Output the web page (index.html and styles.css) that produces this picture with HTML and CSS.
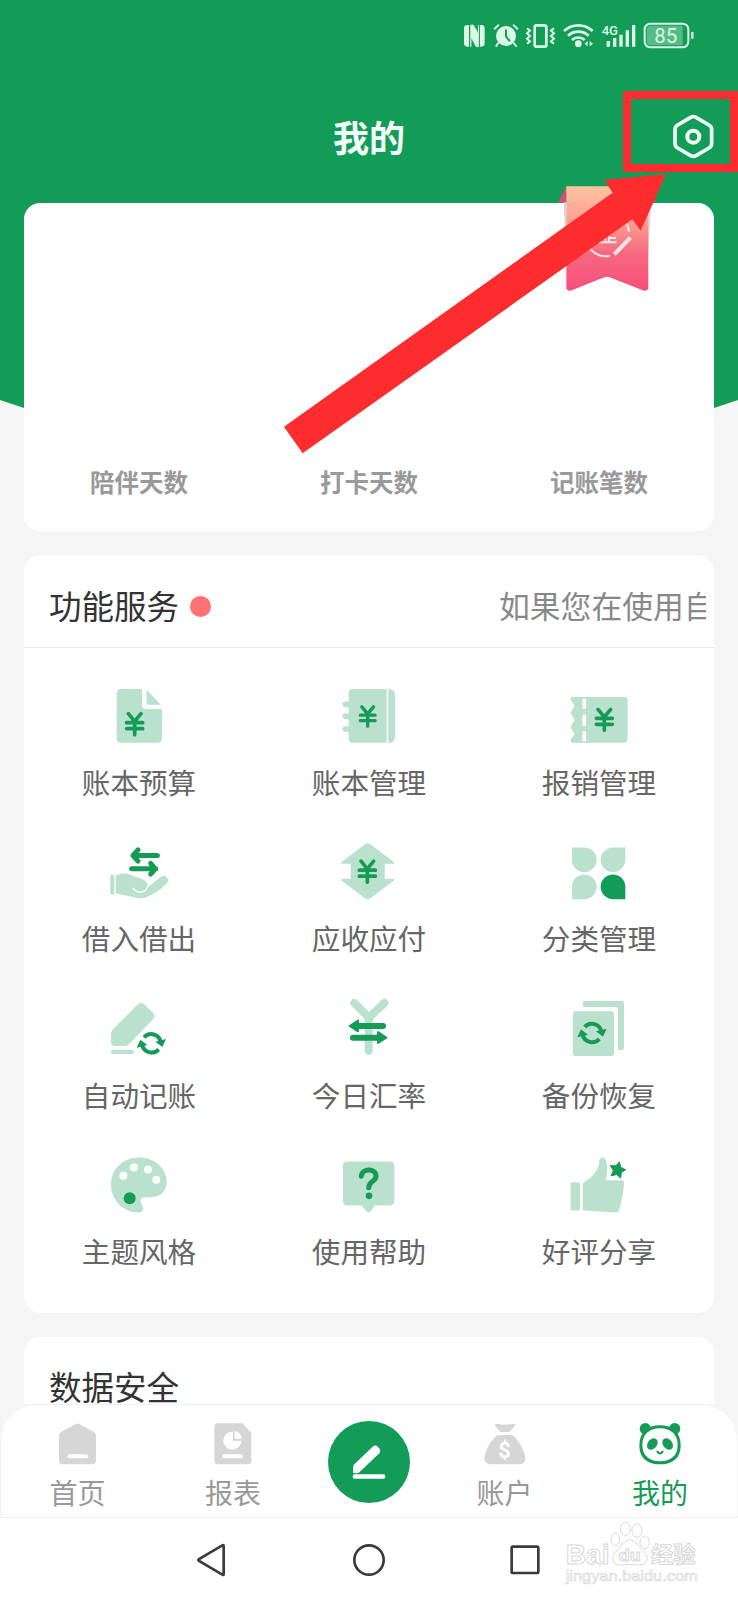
FILE: index.html
```html
<!DOCTYPE html>
<html lang="zh-CN">
<head>
<meta charset="utf-8">
<title>我的</title>
<link rel="stylesheet" href="styles.css">
</head>
<body>
<svg class="defs" aria-hidden="true">
  <defs>
    <g id="yen" fill="none" stroke="#169b57" stroke-width="11" stroke-linecap="round" stroke-linejoin="round">
      <path d="M-19-32 0-9 19-32M0-9V31M-24-5H24M-24 13H24"/>
    </g>
    <g id="sync">
      <path d="M-22-18A29 29 0 0 1 28-4M22 18A29 29 0 0 1-28 4" fill="none" stroke="#169b57" stroke-width="12"/>
      <path d="M12-5 44-13 33 11ZM-12 5-44 13-33-11Z" fill="#169b57"/>
    </g>
  </defs>
</svg>
<div class="screen">
  <header class="hero">
    <div class="status">
      <svg class="status-icons" viewBox="0 0 894 210">
        <g fill="#dcf8e6">
          <path d="M82 75h5v65h-5q-10 0-10-10V85q0-10 10-10ZM120 75h4q10 0 10 10v45q0 10-10 10h-4Z"/>
          <path d="M92 75h8l15 26V75h1v65h-7L93 112v28h-1Z" stroke="#dcf8e6" stroke-width="2"/>
          <circle cx="198" cy="108" r="30"/>
          <path d="m174 130-5 8M222 130l6 8" stroke="#dcf8e6" stroke-width="6" stroke-linecap="round"/>
          <path d="m164 86 11-10M232 86l-11-10" stroke="#dcf8e6" stroke-width="6" stroke-linecap="round"/>
          <path d="M198 91v18l10 13" stroke="#129c57" stroke-width="6" fill="none" stroke-linecap="round"/>
        </g>
        <g fill="none" stroke="#dcf8e6">
          <rect x="284" y="76" width="35" height="64" rx="6" stroke-width="8"/>
          <path d="m261 85 9 7-9 8 9 8-9 8 9 8-9 7M342 85l-9 7 9 8-9 8 9 8-9 8 9 7" stroke-width="6"/>
          <path d="M372 93a63 63 0 0 1 86 0M384 107a46 46 0 0 1 62 0M396 120a28 28 0 0 1 38 0" stroke-width="8"/>
          <path d="M505 123v17M524 114v26M543 104v36M562 91v49M581 75v65" stroke-width="10"/>
          <rect x="614" y="71" width="131" height="71" rx="17" stroke-width="6"/>
        </g>
        <circle cx="415" cy="131" r="10" fill="#dcf8e6"/>
        <path d="m443 123-9 8 9 8ZM449 123l10 8-10 8Z" fill="#dcf8e6"/>
        <path d="M630 77h98v59h-98q-10 0-10-10V87q0-10 10-10Z" fill="#55ba85"/>
        <rect x="753" y="95" width="8" height="22" rx="4" fill="#b6ebcf"/>
        <text x="485" y="104" class="net" textLength="49" lengthAdjust="spacingAndGlyphs">4G</text>
        <text x="643" y="129" class="charge" textLength="69" lengthAdjust="spacingAndGlyphs">85</text>
      </svg>
    </div>
    <div class="titlebar">
      <h1 class="title">我的</h1>
      <svg class="gear" viewBox="698 342 124 136" fill="none" stroke="#f0fff6">
        <path d="M751 352q8-5 16 0l39 23q8 5 8 13v43q0 8-8 13l-39 23q-8 5-16 0l-39-23q-8-5-8-13v-43q0-8 8-13Z" stroke-width="11"/>
        <circle cx="759" cy="410" r="18" stroke-width="12"/>
      </svg>
    </div>
  </header>

  <main class="content">
    <section class="card stats">
      <span>陪伴天数</span><span>打卡天数</span><span>记账笔数</span>
    </section>

    <section class="card services">
      <div class="card-head">
        <h2 class="heading">功能服务</h2><i class="dot"></i>
        <div class="notice">如果您在使用自</div>
      </div>
      <div class="grid">
        <div class="item">
          <svg class="icon" viewBox="138 42 198 198">
            <path fill="#b9e1ce" d="M182 57h64v48q0 12 12 12h48v88q0 13-13 13H182q-12 0-12-13V70q0-13 12-13ZM260 60l42 44h-38q-4 0-4-4Z"/>
            <use href="#yen" x="224" y="163"/>
          </svg><span>账本预算</span>
        </div>
        <div class="item">
          <svg class="icon" viewBox="828 42 198 198">
            <path fill="#b9e1ce" d="M878 57h102v161H878q-12 0-12-12V69q0-12 12-12ZM985 57q20 0 20 19v124q0 18-20 18Z"/>
            <path stroke="#b9e1ce" stroke-width="17" stroke-linecap="round" d="M856 103h12M856 139h12M856 177h12"/>
            <use href="#yen" transform="translate(923 140) scale(.92)"/>
          </svg><span>账本管理</span>
        </div>
        <div class="item">
          <svg class="icon" viewBox="408 42 198 198">
            <path fill="#b9e1ce" fill-rule="evenodd" d="M429 81h153q11 0 11 11v114q0 12-11 12H429q-8 0-8-7l13-19-13-21 13-21-13-22 13-20-13-20q0-7 8-7ZM457 86v30h11V86ZM457 134v33h11v-33ZM457 184v30h11v-30Z"/>
            <use href="#yen" x="523" y="150"/>
          </svg><span>报销管理</span>
        </div>
        <div class="item">
          <svg class="icon" viewBox="138 511.5 198 198">
            <rect x="151" y="613" width="12" height="59" rx="3" fill="#b9e1ce"/>
            <path fill="#b9e1ce" d="M167 616q24-15 48-2l34 13q17 8 14 25l36-31q12-9 21-1 9 10 0 20-31 30-65 42-9 3-21 1l-67-15Z"/>
            <path d="M220 654q8 11 24 11 15-3 18-17" fill="none" stroke="#fff" stroke-width="4" stroke-linecap="round"/>
            <g fill="none" stroke="#169b57" stroke-width="15" stroke-linecap="round" stroke-linejoin="round"><path d="M292 555h-72M234 538l-15 17 15 17M215 595h72M272 579l14 16-14 16"/></g>
          </svg><span>借入借出</span>
        </div>
        <div class="item">
          <svg class="icon" viewBox="828 511.5 198 198">
            <path d="M915 521q8-6 16 0l71 54q2 5-4 5h-24v45h24q6 0 4 5l-71 53q-8 6-16 0l-71-53q-3-5 4-5h24v-45h-24q-7 0-4-5Z" fill="#b9e1ce"/>
            <use href="#yen" x="922" y="604"/>
          </svg><span>应收应付</span>
        </div>
        <div class="item">
          <svg class="icon" viewBox="408 511.5 198 198">
            <path fill="#b9e1ce" d="M426 531h37a37 37 0 1 1-37 37ZM586 531h-37a37 37 0 1 0 37 37ZM426 686h37a37 37 0 1 0-37-37Z"/>
            <path fill="#129c57" d="M586 686h-37a37 37 0 1 1 37-37Z"/>
          </svg><span>分类管理</span>
        </div>
        <div class="item">
          <svg class="icon" viewBox="138 51 198 198">
            <path d="M234 73q9-8 18 0l28 26q8 9 0 18l-73 76q-5 5-12 5h-30q-12 0-12-12v-24q0-8 6-14Z" fill="#b9e1ce"/>
            <rect x="153" y="209" width="69" height="13" rx="6" fill="#b9e1ce"/>
            <use href="#sync" x="274" y="190"/>
          </svg><span>自动记账</span>
        </div>
        <div class="item">
          <svg class="icon" viewBox="828 51 198 198">
            <path d="m883 69 44 44 46-44M926 112v100" fill="none" stroke="#b9e1ce" stroke-width="24" stroke-linecap="round"/>
            <path d="M969 138h-80M879 173h80" stroke="#169b57" stroke-width="18" stroke-linecap="round"/>
            <path d="m869 138 25-16v32ZM979 173l-25-17v33Z" fill="#169b57" stroke="#169b57" stroke-width="6" stroke-linejoin="round"/>
          </svg><span>今日汇率</span>
        </div>
        <div class="item">
          <svg class="icon" viewBox="408 51 198 198">
            <rect x="429" y="94" width="123" height="134" rx="7" fill="#b9e1ce"/>
            <path d="M459 81V70q0-7 7-7h109q7 0 7 7v133q0 7-7 7h-11V88q0-7-7-7Z" fill="#b9e1ce"/>
            <use href="#sync" x="486" y="159"/>
          </svg><span>备份恢复</span>
        </div>
        <div class="item">
          <svg class="icon" viewBox="138 520.5 198 198">
            <path d="M237 531c47 0 83 32 83 73 0 31-21 46-48 46h-18c-15 0-14 12-8 23 6 12 4 23-9 23-49 0-84-38-84-84 0-45 36-81 84-81Z" fill="#b9e1ce"/>
            <g fill="#fff"><circle cx="190" cy="586" r="12"/><circle cx="222" cy="561" r="12"/><circle cx="264" cy="567" r="12"/><circle cx="289" cy="598" r="12"/></g>
            <circle cx="209" cy="653" r="18" fill="#169b57"/>
          </svg><span>主题风格</span>
        </div>
        <div class="item">
          <svg class="icon" viewBox="828 520.5 198 198">
            <path d="M862 543h127q14 0 14 14v104q0 14-14 14h-44l-13 18q-6 6-12 0l-15-18h-43q-13 0-13-14V557q0-14 13-14Z" fill="#b9e1ce"/>
            <path d="M904 587c2-25 44-25 44 0 0 17-22 14-22 35" fill="none" stroke="#169b57" stroke-width="15" stroke-linecap="round"/>
            <circle cx="927" cy="646" r="10" fill="#169b57"/>
          </svg><span>使用帮助</span>
        </div>
        <div class="item">
          <svg class="icon" viewBox="408 520.5 198 198">
            <rect x="422" y="605" width="28" height="85" rx="4" fill="#b9e1ce"/>
            <path d="M458 608c31-18 49-40 50-68 3-12 15-12 20 0 6 18 4 37-1 59h48q7 0 7 8-2 42-15 82-2 7-10 7l-95-6q-4 0-4-5Z" fill="#b9e1ce"/>
            <path d="m568 544 4 16 15 8-13 8-2 17-12-11-17 4 7-16-9-15 17 1Z" fill="#169b57" stroke="#169b57" stroke-width="3" stroke-linejoin="round"/>
          </svg><span>好评分享</span>
        </div>
      </div>
    </section>

    <section class="card security">
      <h2 class="heading">数据安全</h2>
    </section>
  </main>

  <nav class="tabs">
    <div class="tab">
      <svg class="tab-icon" viewBox="171 305 126 132"><path d="M228 311q5-3 10 0l43 23q7 4 7 12v75q0 11-11 11h-88q-12 0-12-11v-75q0-8 7-12Z" fill="#d6d6d6"/><rect x="202" y="402" width="62" height="12" rx="6" fill="#fff"/></svg>
      <span>首页</span>
    </div>
    <div class="tab">
      <svg class="tab-icon" viewBox="638 305 126 132"><path d="M656 309h73l27 28v84q0 11-11 11h-89q-11 0-11-11V320q0-11 11-11Z" fill="#d6d6d6"/><rect x="669" y="402" width="62" height="12" rx="6" fill="#fff"/><path d="M701 334v27h25a27 27 0 1 1-25-27ZM706 332q19 4 22 23h-22Z" fill="#fff"/></svg>
      <span>报表</span>
    </div>
    <div class="tab tab-add">
      <svg class="add" viewBox="984 302 246 246"><circle cx="1107" cy="425" r="123" fill="#129c57"/><path d="M1118 379q7-6 14-1l7 7q5 7-1 14l-60 57q-4 3-9 3h-6q-4 0-4-5v-12q0-6 4-10Z" fill="#fff"/><rect x="1058" y="462" width="98" height="13" rx="6" fill="#fff"/></svg>
    </div>
    <div class="tab">
      <svg class="tab-icon" viewBox="161 305 126 132" fill="#d6d6d6"><path d="M199 310q25 6 50 0 8 0 5 6l-17 19h-28l-14-19q-3-6 4-6ZM206 344h34q8 0 13 6 29 31 32 64 0 18-21 18h-81q-21 0-21-18 3-33 32-64 5-6 12-6Z"/><text x="223" y="412" class="coin">$</text></svg>
      <span>账户</span>
    </div>
    <div class="tab active">
      <svg class="tab-icon" viewBox="628 305 126 132"><g fill="#169b57"><circle cx="647" cy="325" r="17"/><circle cx="735" cy="325" r="17"/><path d="M691 315c38 0 62 21 62 61 0 38-25 56-62 56s-62-18-62-56c0-40 24-61 62-61Z"/></g><path d="M691 324c34 0 53 20 53 50 0 33-22 49-53 49s-53-16-53-49c0-30 19-50 53-50Z" fill="#fff"/><g fill="#169b57"><ellipse cx="668" cy="371" rx="14" ry="19" transform="rotate(38 668 371)"/><ellipse cx="714" cy="371" rx="14" ry="19" transform="rotate(-38 714 371)"/></g><path d="M683 394q8 11 16 0" fill="none" stroke="#169b57" stroke-width="6" stroke-linecap="round"/></svg>
      <span>我的</span>
    </div>
  </nav>

  <footer class="sysnav">
    <svg class="sys sys-back" viewBox="588 668 92 102"><path d="M671 677v85q0 3-4 1l-70-41q-4-3 0-6l70-41q4-2 4 2Z"/></svg>
    <svg class="sys sys-home" viewBox="1056 668 102 102"><circle cx="1107" cy="719" r="44"/></svg>
    <svg class="sys sys-recent" viewBox="236 668 102 102"><rect x="247" y="679" width="80" height="79" rx="4"/></svg>
  </footer>

  <svg class="ribbon" viewBox="860 46 300 326">
    <defs><linearGradient id="rib" x1="0" y1="0" x2="0" y2="1"><stop offset="0" stop-color="#fdc5a0"/><stop offset=".35" stop-color="#fb9d91"/><stop offset=".65" stop-color="#f6687f"/><stop offset="1" stop-color="#f84e7b"/></linearGradient></defs>
    <path d="M888 50v48h-24ZM1134 50v48h24Z" fill="#db4a70"/>
    <path d="m880 98 8 0v170ZM1142 98h-8v170Z" fill="#d5d5d5"/>
    <path d="M888 50h246v305q-2 9-13 8l-103-40q-8-3-16 0l-101 40q-11 2-13-8Z" fill="url(#rib)"/>
    <g fill="none" stroke="#ffe3e8" stroke-width="6"><path d="M958 235a65 65 0 0 0 60 24M1067 160q9 12 9 26M985 218h54M1016 199v19M1018 205h19M1000 204l7 9"/><path d="m1032 254 48-50" stroke-width="12"/></g>
  </svg>
  <div class="frame"></div>
  <svg class="arrow" viewBox="30 0 1170 860"><path d="M42 770 1028 68 1003 30 1188 12 1112 182 1087 148 98 850Z" fill="#fd2c2f"/></svg>

  <svg class="watermark" viewBox="400 590 420 205">
    <g fill="#fff" stroke="#d8d8d8" stroke-width="3">
      <text x="408" y="724" class="wm-latin" textLength="132" lengthAdjust="spacingAndGlyphs">Bai</text>
      <ellipse cx="557" cy="651" rx="13" ry="19"/><ellipse cx="587" cy="620" rx="15" ry="20"/><ellipse cx="622" cy="625" rx="15" ry="20"/><ellipse cx="645" cy="660" rx="14" ry="19"/>
      <path d="M578 665q22-26 44 0 10 14 20 23 20 18 4 35-9 8-44 3-39 6-48-4-12-17 4-33 11-10 20-24Z"/>
      <text x="567" y="717" class="wm-du" textLength="66" lengthAdjust="spacingAndGlyphs">du</text>
      <text x="664" y="718" class="wm-cjk" textLength="134" lengthAdjust="spacingAndGlyphs">经验</text>
      <text x="408" y="777" class="wm-url" textLength="396" lengthAdjust="spacingAndGlyphs">jingyan.baidu.com</text>
    </g>
  </svg>
</div>
</body>
</html>
```

FILE: styles.css
```css
* { box-sizing: border-box; }
body {
  margin: 0;
  background: #f5f5f5;
  font-family: "Noto Sans CJK SC", "Noto Sans", sans-serif;
}
h1, h2 { margin: 0; font-weight: 400; }
svg { display: block; flex: none; }
.defs { position: absolute; width: 0; height: 0; }

.screen {
  position: relative;
  display: flex;
  flex-direction: column;
  width: 738px;
  height: 1600px;
  overflow: hidden;
}
.hero {
  flex: none;
  height: 408px;
  background: #129c57;
  clip-path: polygon(0 0, 100% 0, 100% 400px, 714px 408px, 24px 408px, 0 400px);
}
.status { display: flex; justify-content: flex-end; height: 70px; }
.status-icons { width: 298px; height: 70px; }
.net { font: 500 36px Roboto, sans-serif; fill: #dcf8e6; }
.charge { font: 400 62px Roboto, sans-serif; fill: #dcf8e6; }
.titlebar {
  display: grid;
  grid-template-columns: 1fr auto 1fr;
  align-items: center;
  height: 134px;
  padding-right: 24px;
  padding-left: 24px;
}
.title {
  grid-column: 2;
  padding-bottom: 3px;
  font-size: 36px;
  font-weight: 700;
  line-height: 52px;
  color: #f5fff9;
}
.gear { justify-self: end; width: 41.3px; height: 45.3px; }

.content {
  position: relative;
  display: flex;
  flex: 1;
  flex-direction: column;
  gap: 24px;
  min-height: 0;
  margin-top: -205px;
  padding: 0 24px;
  overflow: hidden;
}
.card { flex: none; border-radius: 16px; background: #fff; }
.stats {
  display: grid;
  grid-template-columns: repeat(3, 1fr);
  align-items: end;
  height: 328px;
  padding-bottom: 31px;
  font-size: 24.5px;
  font-weight: 700;
  line-height: 36px;
  text-align: center;
  color: #999;
}
.services { height: 758px; }
.card-head {
  display: flex;
  align-items: center;
  height: 92.5px;
  padding: 8px 8px 0 25px;
  border-bottom: 1px solid #e9e9e9;
}
.heading { font-size: 32.5px; line-height: 48px; color: #333; }
.dot { width: 21px; height: 21px; margin: 3px 0 0 11px; border-radius: 50%; background: #ff7272; }
.notice {
  width: 207px;
  margin-left: auto;
  overflow: hidden;
  font-size: 30.8px;
  line-height: 46px;
  white-space: nowrap;
  color: #888;
}
.grid {
  display: grid;
  grid-template-columns: repeat(3, 1fr);
  grid-auto-rows: 156.5px;
  padding-top: 36.5px;
}
.item {
  display: flex;
  flex-direction: column;
  align-items: center;
  gap: 10.5px;
  font-size: 28.6px;
  line-height: 42px;
  color: #666;
}
.icon { width: 66px; height: 66px; }
.security { height: 120px; padding: 25px 25px; }

.tabs {
  display: grid;
  flex: none;
  grid-template-columns: 155px 156px 116px 155px 156px;
  height: 114px;
  border-radius: 36px 36px 0 0;
  background: #fff;
  box-shadow: inset 0 0 0 1px #f1f1f1, 0 0 0 40px #f5f5f5;
  clip-path: inset(0);
}
.tab {
  display: flex;
  flex-direction: column;
  align-items: center;
  gap: 6px;
  padding-top: 18px;
  font-size: 28px;
  line-height: 40px;
  color: #999;
}
.tab-icon { width: 42px; height: 44px; }
.coin { font: 700 66px Roboto, sans-serif; fill: #fff; text-anchor: middle; }
.tab-add { padding-top: 17px; }
.add { width: 82px; height: 82px; }
.active { color: #169b57; }

.sysnav {
  display: flex;
  flex: none;
  align-items: center;
  height: 82px;
  padding: 2px 0 0 196px;
  background: #fff;
}
.sys { fill: none; stroke: #3a3a3a; stroke-width: 8; height: 34px; }
.sys-back { width: 30.7px; }
.sys-home { width: 34px; margin-left: 125.3px; }
.sys-recent { width: 34px; margin-left: 122.5px; }

.ribbon { position: absolute; top: 185.3px; left: 556.7px; width: 100px; height: 108.7px; }
.frame {
  position: absolute;
  top: 91px;
  left: 623px;
  width: 115px;
  height: 81px;
  border: 8px solid #fd2c2f;
  border-radius: 3px 0 0 3px;
}
.arrow { position: absolute; top: 170px; left: 280px; width: 390px; height: 286.7px; }
.watermark { position: absolute; top: 1518.7px; left: 563.3px; width: 140px; height: 68.3px; }
.wm-latin { font: 700 84px "Liberation Sans", sans-serif; }
.wm-du { font: 700 50px "Liberation Sans", sans-serif; }
.wm-cjk { font: 700 66px "Noto Sans CJK SC", sans-serif; }
.wm-url { font: 400 45px "Liberation Sans", sans-serif; stroke-width: 2px; }
```
